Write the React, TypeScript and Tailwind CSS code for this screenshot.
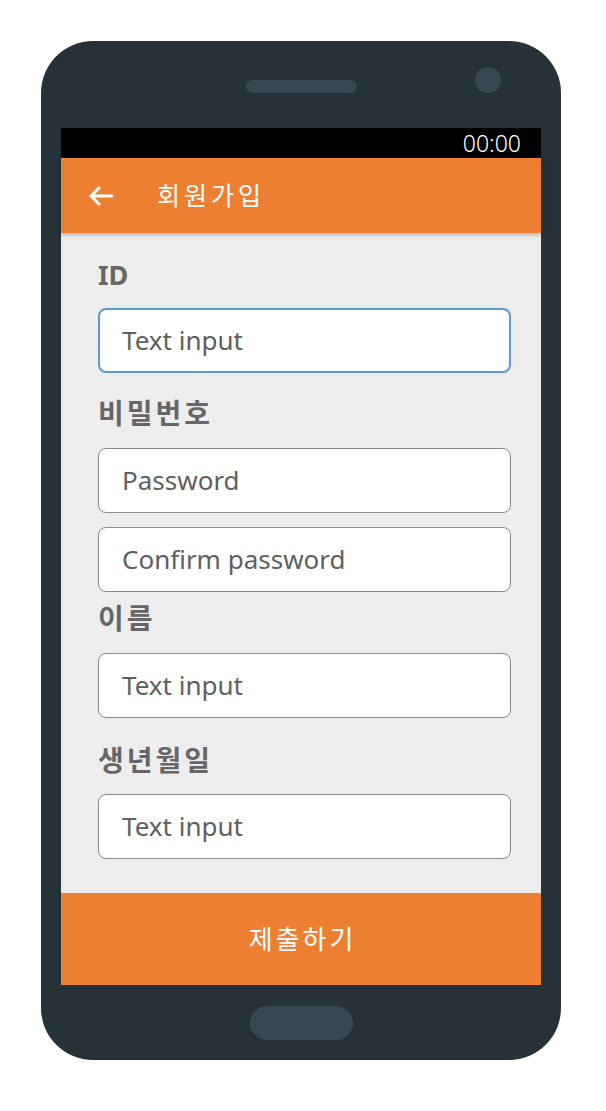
import React from "react";

const latin = "font-['Noto_Sans','Noto_Sans_CJK_KR',sans-serif]";

function Label({ text, mt, ko = true }: { text: string; mt: string; ko?: boolean }) {
  return (
    <div
      className={`${mt} h-[32px] leading-[32px] font-bold text-[#666666] ${
        ko ? "text-[28px] tracking-[3px]" : "text-[27px]"
      }`}
    >
      {text}
    </div>
  );
}

function Field({ placeholder, mt, focused }: { placeholder: string; mt: string; focused?: boolean }) {
  return (
    <div
      className={`${mt} h-[65px] w-[413px] rounded-[8px] bg-white flex items-center text-[26px] text-[#5f5f5f] ${
        focused ? "border-2 border-[#5b9bd5] pl-[22px]" : "border border-[#8a8a8a] pl-[23px]"
      }`}
    >
      {placeholder}
    </div>
  );
}

export default function App() {
  return (
    <div className={`w-[606px] h-[1111px] bg-white ${latin}`}>
      <div className="pt-[41px] pl-[41px]">
        <div className="w-[520px] h-[1019px] rounded-[52px] bg-[#263238] flex flex-col">
          <div className="relative h-[87px] flex justify-center pt-[39px]">
            <div className="w-[111px] h-[13px] rounded-full bg-[#37474f]" />
            <div className="absolute left-[434px] top-[26px] w-[26px] h-[26px] rounded-full bg-[#37474f]" />
          </div>
          <div className="ml-[20px] w-[480px] h-[857px] flex flex-col bg-[#ededed]">
            <div className="h-[30px] bg-black flex items-center justify-end pr-[20px] text-white text-[23px] font-light">
              00:00
            </div>
            <div className="h-[75px] bg-[#ed7f32] flex items-center text-white shadow-[0_2px_4px_rgba(0,0,0,0.25)] relative">
              <svg className="ml-[27px]" width="26" height="20" viewBox="0 0 26 20" fill="none">
                <path d="M24 10H3M11 2L3 10L11 18" stroke="white" strokeWidth="3" strokeLinecap="round" strokeLinejoin="round" />
              </svg>
              <span className="ml-[43px] text-[25px] tracking-[4px]">회원가입</span>
            </div>
            <div className="flex-1 pl-[37px] pt-[26px]">
              <Label text="ID" mt="mt-0" ko={false} />
              <Field placeholder="Text input" mt="mt-[17px]" focused />
              <Label text="비밀번호" mt="mt-[24px]" />
              <Field placeholder="Password" mt="mt-[19px]" />
              <Field placeholder="Confirm password" mt="mt-[14px]" />
              <Label text="이름" mt="mt-[10px]" />
              <Field placeholder="Text input" mt="mt-[19px]" />
              <Label text="생년월일" mt="mt-[26px]" />
              <Field placeholder="Text input" mt="mt-[18px]" />
            </div>
            <div className="h-[92px] bg-[#ed7f32] flex items-center justify-center text-white text-[26px] tracking-[3px] pl-[3px]">
              제출하기
            </div>
          </div>
          <div className="flex-1 flex items-center justify-center">
            <div className="w-[103px] h-[34px] rounded-full bg-[#37474f]" />
          </div>
        </div>
      </div>
    </div>
  );
}
